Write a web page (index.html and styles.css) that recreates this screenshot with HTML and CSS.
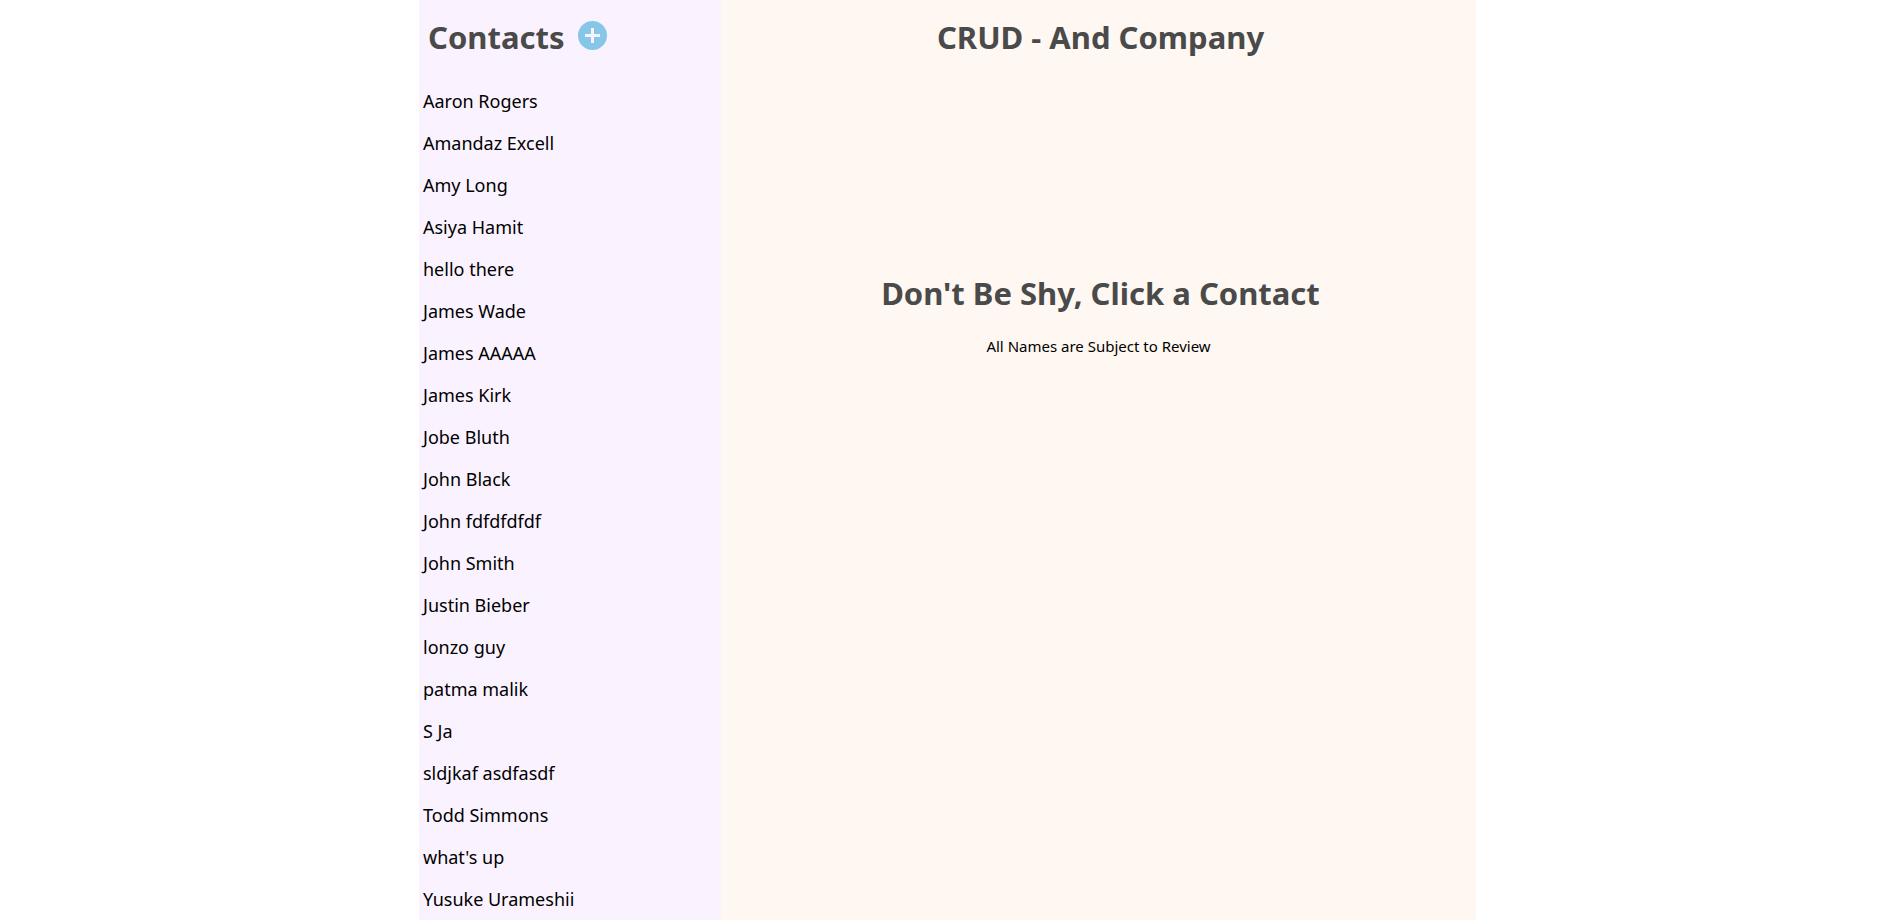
FILE: index.html
```html
<!DOCTYPE html>
<html lang="en">
<head>
<meta charset="utf-8">
<title>Contacts</title>
<meta name="viewport" content="width=device-width, initial-scale=1">
<link rel="stylesheet" href="styles.css">
</head>
<body>
<div class="app">
  <aside class="sidebar">
    <header class="sidebar-header">
      <h1 class="title">Contacts</h1>
      <button class="add-button" type="button" aria-label="Add contact">
        <svg class="add-icon" viewBox="0 0 29 29" aria-hidden="true">
          <circle cx="14.5" cy="14.5" r="14.5" fill="#85c6e9"/>
          <path d="M14.5 7v15M7 14.5h15" stroke="#faf3ff" stroke-width="3"/>
        </svg>
      </button>
    </header>
    <ul class="contacts">
      <li><a class="contact" href="#">Aaron Rogers</a></li>
      <li><a class="contact" href="#">Amandaz Excell</a></li>
      <li><a class="contact" href="#">Amy Long</a></li>
      <li><a class="contact" href="#">Asiya Hamit</a></li>
      <li><a class="contact" href="#">hello there</a></li>
      <li><a class="contact" href="#">James Wade</a></li>
      <li><a class="contact" href="#">James AAAAA</a></li>
      <li><a class="contact" href="#">James Kirk</a></li>
      <li><a class="contact" href="#">Jobe Bluth</a></li>
      <li><a class="contact" href="#">John Black</a></li>
      <li><a class="contact" href="#">John fdfdfdfdf</a></li>
      <li><a class="contact" href="#">John Smith</a></li>
      <li><a class="contact" href="#">Justin Bieber</a></li>
      <li><a class="contact" href="#">lonzo guy</a></li>
      <li><a class="contact" href="#">patma malik</a></li>
      <li><a class="contact" href="#">S Ja</a></li>
      <li><a class="contact" href="#">sldjkaf asdfasdf</a></li>
      <li><a class="contact" href="#">Todd Simmons</a></li>
      <li><a class="contact" href="#">what's up</a></li>
      <li><a class="contact" href="#">Yusuke Urameshii</a></li>
    </ul>
  </aside>
  <main class="detail">
    <h1 class="title">CRUD - And Company</h1>
    <section class="prompt">
      <h2 class="title">Don't Be Shy, Click a Contact</h2>
      <p class="note">All Names are Subject to Review</p>
    </section>
  </main>
</div>
</body>
</html>
```
FILE: styles.css
```css
* {
  box-sizing: border-box;
}

body {
  margin: 0;
  background: #fff;
  color: #000;
  font-family: "Segoe UI", "Noto Sans", sans-serif;
}

.app {
  display: grid;
  grid-template-columns: 2fr 5fr;
  max-width: 1057px;
  margin: 0 auto;
}

.sidebar {
  background: #faf3ff;
}

.sidebar-header {
  display: flex;
  align-items: flex-start;
  gap: 14px;
  padding: 16px 9px 21px;
}

.title {
  margin: 0;
  padding-left: 4px;
  color: #4a4a4a;
  font-size: 31px;
  font-weight: 700;
  line-height: 43px;
}

.sidebar-header .title {
  padding-left: 0;
}

.add-button {
  display: flex;
  margin: 0;
  padding: 5px 0 0;
  border: 0;
  background: none;
  cursor: pointer;
}

.add-icon {
  width: 29px;
  height: 29px;
}

.contacts {
  margin: 0;
  padding: 0;
  list-style: none;
}

.contact {
  display: block;
  padding: 0 4px;
  color: inherit;
  font-size: 18px;
  line-height: 42px;
  text-decoration: none;
}

.detail {
  padding-top: 16px;
  background: #fff8f2;
  text-align: center;
}

.prompt {
  padding-top: 213px;
}

.note {
  margin: 19px 0 0;
  font-size: 15px;
  line-height: 24px;
}
```
